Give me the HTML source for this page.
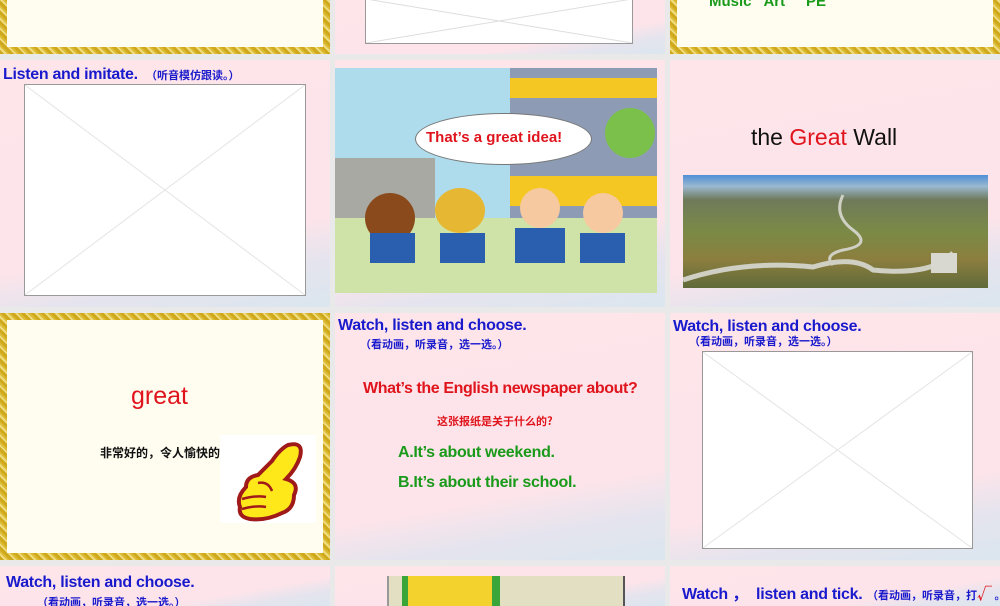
<!DOCTYPE html>
<html><head><meta charset="utf-8"><style>
body{margin:0;width:1000px;height:600px;background:#e9e9ea;position:relative;overflow:hidden;font-family:"Liberation Sans","Noto Sans CJK SC",sans-serif}
.s{position:absolute;overflow:hidden;background:linear-gradient(170deg,#fde5ea 0%,#fde4ea 70%,#e4e4ee 85%,#dbe6ef 100%)}
.g{background:#fefdf0;box-sizing:border-box;border:7px solid #d8b62a;border-image:repeating-linear-gradient(45deg,#cfa81c 0 3px,#efdc80 3px 5px,#dcbc36 5px 7px) 7}
.a{position:absolute;white-space:nowrap}
.ph{position:absolute;background:#fff;border:1px solid #999;box-sizing:border-box}
.ph svg{width:100%;height:100%;display:block}
.b{color:#1a1acd;font-weight:bold}
.cn{font-family:"Noto Sans CJK SC",sans-serif;font-weight:bold}
</style></head><body>
<!-- row1 -->
<div class="s g" style="left:0;top:-10px;width:330px;height:64px"></div>
<div class="s" style="left:335px;top:0;width:330px;height:54px">
 <div class="ph" style="left:30px;top:-2px;width:268px;height:46px"><svg viewBox="0 0 268 46" preserveAspectRatio="none"><path d="M0 0L268 46M268 0L0 46" stroke="#ddd" stroke-width="1"/></svg></div>
</div>
<div class="s g" style="left:670px;top:-10px;width:330px;height:64px">
 <div class="a" style="left:32px;top:-4px;color:#1a9a1a;font-size:15px;font-weight:bold">Music &nbsp; Art &nbsp; &nbsp; PE</div>
</div>
<!-- row2 -->
<div class="s" style="left:0;top:60px;width:330px;height:247px">
 <div class="a b" style="left:3px;top:6px;font-size:16px;letter-spacing:-0.3px">Listen and imitate.</div>
 <div class="a cn" style="left:146px;top:7px;font-size:11px;color:#1a1acd">（听音模仿跟读。）</div>
 <div class="ph" style="left:24px;top:24px;width:282px;height:212px"><svg viewBox="0 0 282 212" preserveAspectRatio="none"><path d="M0 0L282 212M282 0L0 212" stroke="#e4e4e4"/></svg></div>
</div>
<div class="s" style="left:335px;top:60px;width:330px;height:247px">
 <div style="position:absolute;left:0;top:8px;width:322px;height:225px;background:#aedcec;overflow:hidden">
  <div style="position:absolute;left:175px;top:0;width:147px;height:190px;background:#8d9cb4"></div>
  <div style="position:absolute;left:175px;top:10px;width:147px;height:20px;background:#f5c722"></div>
  <div style="position:absolute;left:175px;top:108px;width:147px;height:30px;background:#f5c722"></div>
  <div style="position:absolute;left:0;top:90px;width:100px;height:100px;background:#a9a9a3"></div>
  <div style="position:absolute;left:270px;top:40px;width:50px;height:50px;border-radius:50%;background:#7cc04c"></div>
  <div style="position:absolute;left:0;top:150px;width:322px;height:75px;background:#cfe3a8"></div>
  <div style="position:absolute;left:80px;top:45px;width:175px;height:50px;border-radius:50%;background:#fff;border:1px solid #777"></div>
  <div class="a" style="left:91px;top:61px;color:#e0141c;font-size:15px;font-weight:bold">That’s a great idea!</div>
  <div style="position:absolute;left:30px;top:125px;width:50px;height:50px;border-radius:50%;background:#8a4a1c"></div>
  <div style="position:absolute;left:100px;top:120px;width:50px;height:45px;border-radius:50%;background:#e6b733"></div>
  <div style="position:absolute;left:185px;top:120px;width:40px;height:40px;border-radius:50%;background:#f6c9a0"></div>
  <div style="position:absolute;left:248px;top:125px;width:40px;height:40px;border-radius:50%;background:#f6c9a0"></div>
  <div style="position:absolute;left:35px;top:165px;width:45px;height:30px;background:#2a5fb0"></div>
  <div style="position:absolute;left:105px;top:165px;width:45px;height:30px;background:#2a5fb0"></div>
  <div style="position:absolute;left:180px;top:160px;width:50px;height:35px;background:#2a5fb0"></div>
  <div style="position:absolute;left:245px;top:165px;width:45px;height:30px;background:#2a5fb0"></div>
 </div>
</div>
<div class="s" style="left:670px;top:60px;width:330px;height:247px">
 <div class="a" style="left:81px;top:64px;font-size:23px;color:#111">the <span style="color:#e0141c">Great</span> Wall</div>
 <div style="position:absolute;left:13px;top:115px;width:305px;height:113px;background:linear-gradient(180deg,#4f8fd8 0%,#9ab8d0 10%,#6f7a5a 22%,#7a8a46 50%,#8c7e3e 75%,#5f6a3a 100%)">
  <svg viewBox="0 0 305 113" width="305" height="113" style="position:absolute;left:0;top:0"><path d="M0 105 Q60 85 130 92 Q170 80 190 95 Q240 100 262 85 L270 78" stroke="#cfcfc4" stroke-width="5" fill="none"/><path d="M160 20 Q150 40 170 55 Q190 70 160 75 Q140 80 150 90" stroke="#cfcfc4" stroke-width="3" fill="none"/><rect x="248" y="78" width="26" height="20" fill="#d8d8d0"/></svg>
 </div>
</div>
<!-- row3 -->
<div class="s g" style="left:0;top:313px;width:330px;height:247px">
 <div class="a" style="left:124px;top:62px;font-size:25px;color:#e0141c">great</div>
 <div class="a cn" style="left:93px;top:124px;font-size:12px;color:#111">非常好的，令人愉快的</div>
 <div style="position:absolute;left:213px;top:115px;width:96px;height:88px;background:#fff">
  <svg viewBox="0 0 96 88" width="96" height="88"><path d="M26 52 Q26 42 38 40 L52 26 Q60 14 68 10 Q84 6 80 22 Q76 34 66 44 Q80 48 74 60 Q74 74 62 78 Q46 86 30 84 Q18 82 20 72 Q16 62 26 52Z" fill="#ffe81a" stroke="#a01a1a" stroke-width="4"/><path d="M22 64 Q36 60 46 62 M22 74 Q36 70 46 72 M38 48 Q48 46 52 56" stroke="#a01a1a" stroke-width="2.5" fill="none"/></svg>
 </div>
</div>
<div class="s" style="left:335px;top:313px;width:330px;height:247px">
 <div class="a b" style="left:3px;top:4px;font-size:16px;letter-spacing:-0.3px">Watch, listen and choose.</div>
 <div class="a cn" style="left:25px;top:23px;font-size:11px;color:#1a1acd">（看动画，听录音，选一选。）</div>
 <div class="a" style="left:28px;top:67px;font-size:16px;font-weight:bold;color:#e0141c;letter-spacing:-0.4px">What’s the English newspaper about?</div>
 <div class="a cn" style="left:102px;top:100px;font-size:11px;color:#e0141c">这张报纸是关于什么的?</div>
 <div class="a" style="left:63px;top:131px;font-size:16px;font-weight:bold;color:#1a9a1a;letter-spacing:-0.3px">A.It’s about weekend.</div>
 <div class="a" style="left:63px;top:161px;font-size:16px;font-weight:bold;color:#1a9a1a;letter-spacing:-0.3px">B.It’s about their school.</div>
</div>
<div class="s" style="left:670px;top:313px;width:330px;height:247px">
 <div class="a b" style="left:3px;top:5px;font-size:16px;letter-spacing:-0.3px">Watch, listen and choose.</div>
 <div class="a cn" style="left:19px;top:20px;font-size:11px;color:#1a1acd">（看动画，听录音，选一选。）</div>
 <div class="ph" style="left:32px;top:38px;width:271px;height:198px"><svg viewBox="0 0 271 198" preserveAspectRatio="none"><path d="M0 0L271 198M271 0L0 198" stroke="#e4e4e4"/></svg></div>
</div>
<!-- row4 -->
<div class="s" style="left:0;top:566px;width:330px;height:40px">
 <div class="a b" style="left:6px;top:8px;font-size:16px;letter-spacing:-0.3px">Watch, listen and choose.</div>
 <div class="a cn" style="left:37px;top:28px;font-size:11px;color:#1a1acd">（看动画，听录音，选一选。）</div>
</div>
<div class="s" style="left:335px;top:566px;width:330px;height:40px">
 <div style="position:absolute;left:52px;top:10px;width:234px;height:30px;background:#e3dfc2;border-left:2px solid #999;border-right:2px solid #555"></div>
 <div style="position:absolute;left:67px;top:10px;width:84px;height:30px;background:#f3d22e;border-left:6px solid #3aa63a;border-right:8px solid #3aa63a"></div>
</div>
<div class="s" style="left:670px;top:566px;width:330px;height:40px">
 <div class="a b" style="left:12px;top:14px;font-size:16px;letter-spacing:-0.3px">Watch ， &nbsp;listen and tick.</div>
 <div class="a cn" style="left:197px;top:17px;font-size:11px;color:#1a1acd">（看动画，听录音，打<span style="color:#e0141c;font-size:15px">√</span> 。</div>
</div>
</body></html>
